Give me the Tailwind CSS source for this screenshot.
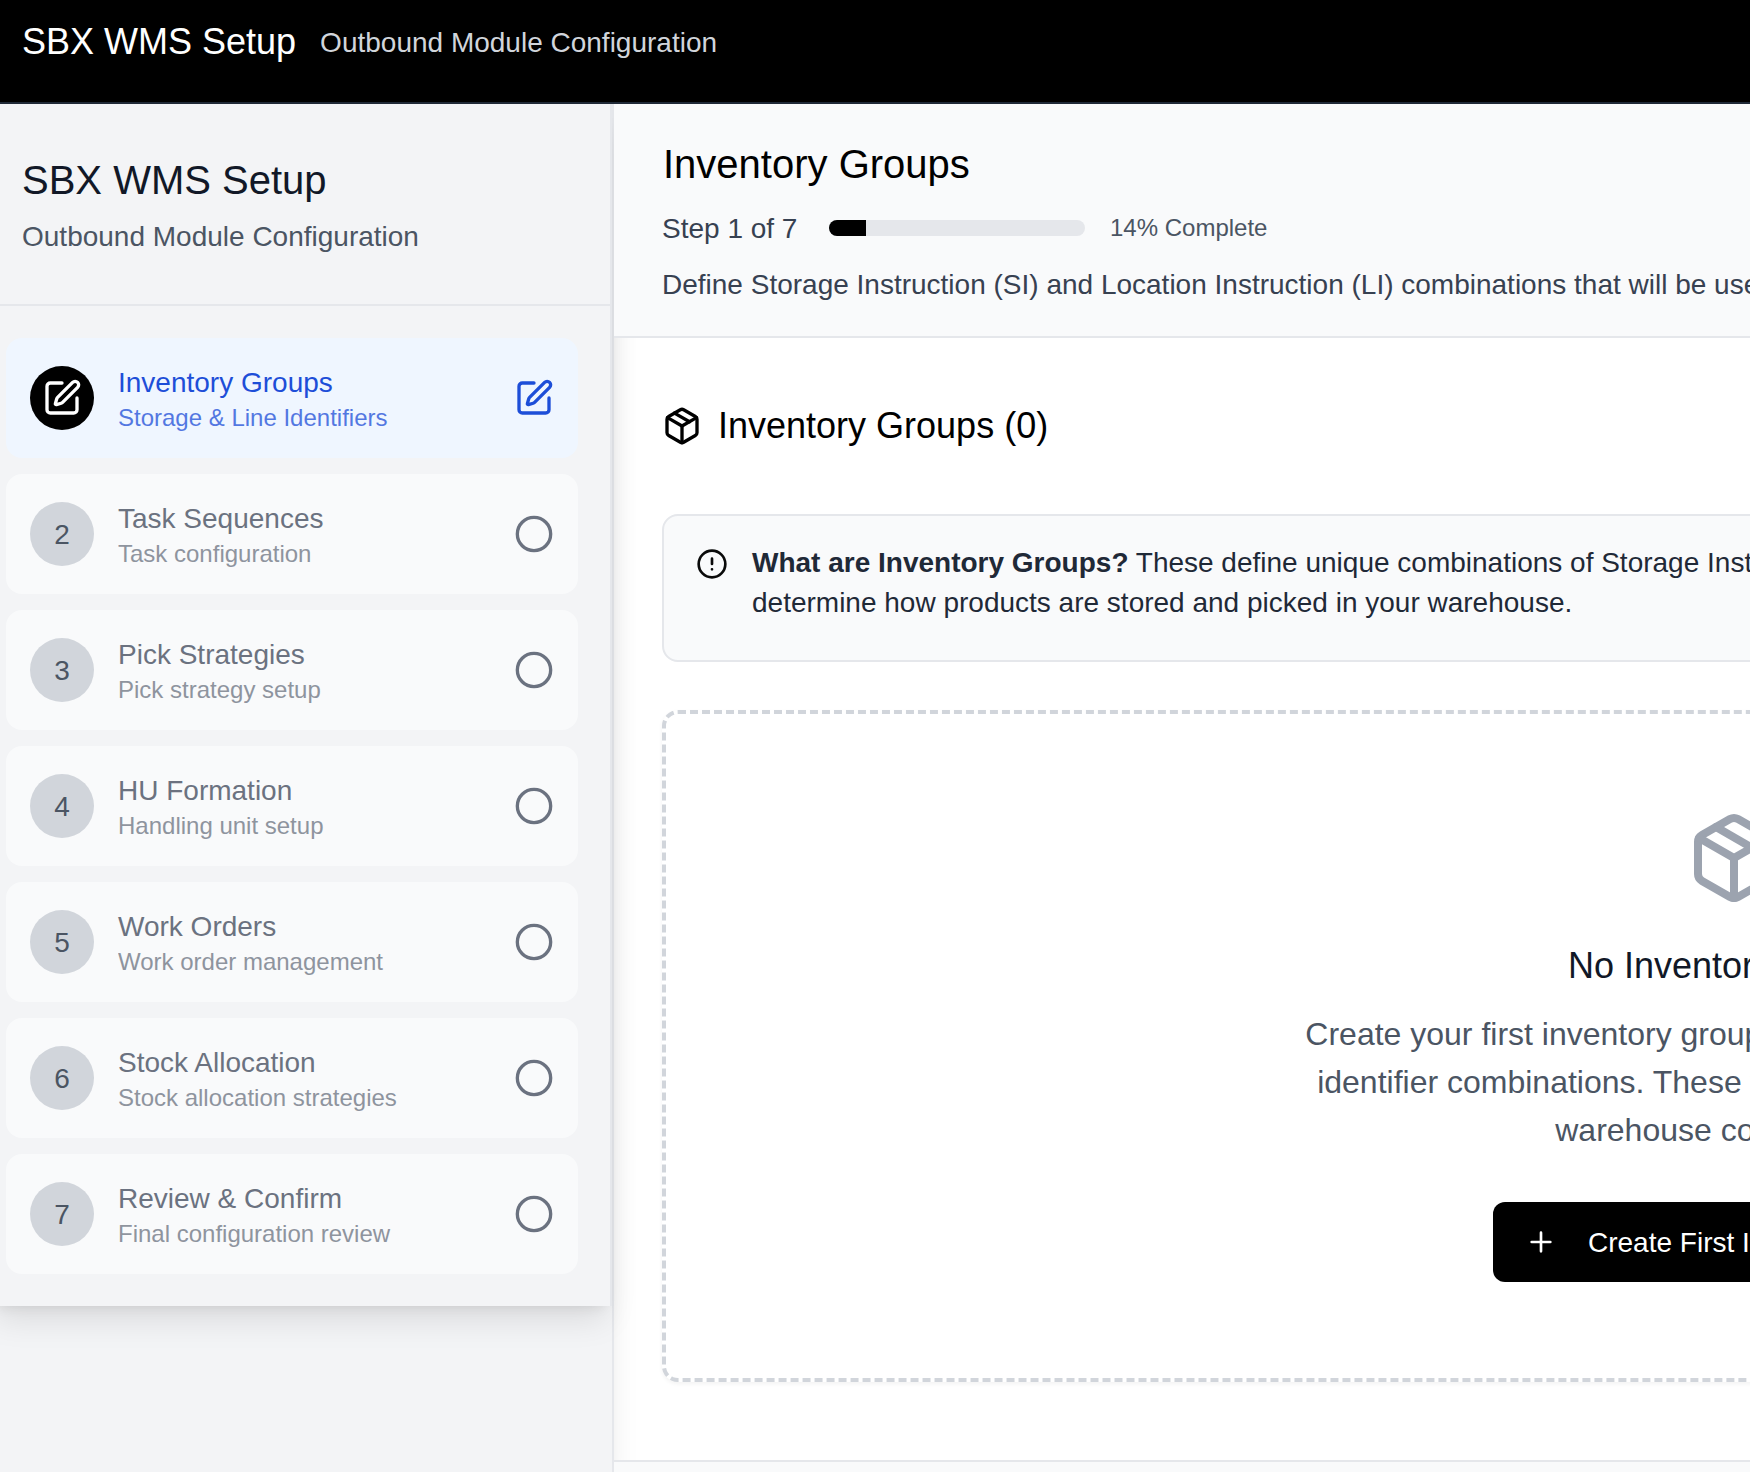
<!DOCTYPE html>
<html lang="en">
<head>
<meta charset="utf-8">
<title>SBX WMS Setup</title>
<script src="https://cdn.jsdelivr.net/npm/@tailwindcss/browser@4"></script>
</head>
<body class="h-[1472px] w-[1750px] overflow-hidden bg-white font-['Liberation_Sans',Arial,sans-serif] text-[28px] leading-[40px]">
<svg class="hidden">
  <symbol id="pen" viewBox="0 0 24 24"><path d="M12 3H5a2 2 0 0 0-2 2v14a2 2 0 0 0 2 2h14a2 2 0 0 0 2-2v-7"/><path d="M18.375 2.625a1 1 0 0 1 3 3l-9.013 9.014a2 2 0 0 1-.853.505l-2.873.84a.5.5 0 0 1-.62-.62l.84-2.873a2 2 0 0 1 .506-.852z"/></symbol>
  <symbol id="circle" viewBox="0 0 24 24"><circle cx="12" cy="12" r="10"/></symbol>
  <symbol id="package" viewBox="0 0 24 24"><path d="m7.5 4.27 9 5.15"/><path d="M21 8a2 2 0 0 0-1-1.73l-7-4a2 2 0 0 0-2 0l-7 4A2 2 0 0 0 3 8v8a2 2 0 0 0 1 1.73l7 4a2 2 0 0 0 2 0l7-4A2 2 0 0 0 21 16Z"/><path d="m3.3 7 8.7 5 8.7-5"/><path d="M12 22V12"/></symbol>
</svg>

<header class="relative z-20 flex h-[104px] border-b-2 border-[#1f2937] bg-black pl-[22px] pt-[14px]">
  <h1 class="h-[56px] text-[36px] leading-[56px] text-white">SBX WMS Setup</h1>
  <span class="ml-6 mt-[9px] text-[#d1d5db]">Outbound Module Configuration</span>
</header>

<div class="flex h-[1368px]">
  <aside class="relative z-10 w-[614px] shrink-0 border-r-2 border-[#e5e7eb] bg-[#f3f4f6] shadow-[0_20px_30px_-6px_rgb(0_0_0/0.1),0_8px_12px_-8px_rgb(0_0_0/0.1)]">
    <div class="-ml-[10px] h-[1202px] w-[622px] border-r-2 border-[#e5e7eb] bg-[#f3f4f6] pl-[10px] shadow-[0_20px_30px_-6px_rgb(0_0_0/0.1),0_8px_12px_-8px_rgb(0_0_0/0.1)]">
      <div class="h-[202px] border-b-2 border-[#e5e7eb] pl-[22px] pt-12">
        <h2 class="text-[40px] leading-[56px] text-[#111827]">SBX WMS Setup</h2>
        <p class="mt-[9px] text-[#4b5563]">Outbound Module Configuration</p>
      </div>
      <nav id="steps" class="flex flex-col gap-4 pl-[6px] pr-8 pt-8"></nav>
    </div>
  </aside>

  <main class="flex w-[2240px] shrink-0 flex-col">
    <section class="relative z-20 h-[234px] border-b-2 border-[#e5e7eb] bg-[#f9fafb] px-12 pt-8">
      <h2 class="pl-px text-[40px] leading-[56px] text-black">Inventory Groups</h2>
      <div class="mt-[12px] flex h-[48px] items-center">
        <span class="w-[167px] pt-[2px] text-[#374151]">Step 1 of 7</span>
        <div class="h-4 w-64 overflow-hidden rounded-full bg-[#e5e7eb]"><div class="h-4 bg-black" style="width:14.2857%"></div></div>
        <span class="ml-[25px] text-[24px] leading-[32px] text-[#4b5563]">14% Complete</span>
      </div>
      <p class="mt-[13px] whitespace-nowrap text-[#374151]">Define Storage Instruction (SI) and Location Instruction (LI) combinations that will be used throughout the system.</p>
    </section>

    <section class="h-[1122px] px-12 pt-[60px]">
      <div class="flex h-[56px] items-center gap-4">
        <svg class="size-10 fill-none stroke-black stroke-2 [stroke-linecap:round] [stroke-linejoin:round]"><use href="#package"/></svg>
        <h3 class="text-[36px] leading-[56px] text-black">Inventory Groups (0)</h3>
      </div>
      <div class="mt-[60px] flex h-[148px] gap-6 rounded-2xl border-2 border-[#e5e7eb] bg-[#f9fafb] px-8 pt-[27px]">
        <svg class="mt-[5px] size-8 shrink-0 fill-none stroke-[#0a0a0a] stroke-2 [stroke-linecap:round] [stroke-linejoin:round]" viewBox="0 0 24 24"><circle cx="12" cy="12" r="10"/><path d="M12 8v4M12 16h.01"/></svg>
        <p class="whitespace-nowrap text-[#1f2937]"><strong class="font-bold">What are Inventory Groups?</strong> These define unique combinations of Storage Instruction (SI) and Location Instruction (LI) that<br>determine how products are stored and picked in your warehouse.</p>
      </div>
      <div class="mt-12 flex h-[672px] w-[2144px] flex-col items-center rounded-2xl border-4 border-dashed border-[#d1d5db] bg-white pt-24 shadow-[0_2px_4px_rgb(0_0_0/0.05)]">
        <svg class="size-24 shrink-0 fill-none stroke-[#9ca3af] stroke-2 [stroke-linecap:round] [stroke-linejoin:round]"><use href="#package"/></svg>
        <h3 class="mt-8 text-[36px] leading-[56px] text-[#111827]">No Inventory Groups</h3>
        <p class="mt-4 whitespace-nowrap text-center text-[32px] leading-[48px] text-[#4b5563]">Create your first inventory group by defining storage and line<br>identifier combinations. These will be used throughout your<br>warehouse configuration.</p>
        <button class="mt-12 flex h-20 w-[482px] items-center gap-[31px] whitespace-nowrap rounded-xl bg-black pl-8 text-white">
          <svg class="size-8 shrink-0 fill-none stroke-white stroke-2 [stroke-linecap:round]" viewBox="0 0 24 24"><path d="M5 12h14M12 5v14"/></svg>
          <span class="pt-px">Create First Inventory Group</span>
        </button>
      </div>
    </section>
    <footer class="relative z-20 h-[12px] border-t-2 border-[#e5e7eb] bg-[#f9fafb]"></footer>
  </main>
</div>

<template id="step">
  <div class="flex h-[120px] items-center rounded-2xl bg-[#f9fafb] px-6 text-[#6b7280]">
    <div class="badge flex size-16 items-center justify-center rounded-full bg-[#d1d5db] leading-[42px] text-[#4b5563]"></div>
    <div class="ml-6 flex-1">
      <div class="name h-10 leading-[42px]"></div>
      <div class="note text-[24px] leading-[32px] opacity-75"></div>
    </div>
    <svg class="size-10 fill-none stroke-current stroke-2 [stroke-linecap:round] [stroke-linejoin:round]"><use href="#circle"/></svg>
  </div>
</template>
<script>
const steps = [
  ['Inventory Groups', 'Storage & Line Identifiers'],
  ['Task Sequences', 'Task configuration'],
  ['Pick Strategies', 'Pick strategy setup'],
  ['HU Formation', 'Handling unit setup'],
  ['Work Orders', 'Work order management'],
  ['Stock Allocation', 'Stock allocation strategies'],
  ['Review & Confirm', 'Final configuration review']
];
const nav = document.getElementById('steps');
steps.forEach(([name, note], i) => {
  const card = document.getElementById('step').content.cloneNode(true).firstElementChild;
  card.querySelector('.name').textContent = name;
  card.querySelector('.note').textContent = note;
  const badge = card.querySelector('.badge');
  if (i === 0) {
    card.classList.replace('bg-[#f9fafb]', 'bg-[#eff6ff]');
    card.classList.replace('text-[#6b7280]', 'text-[#1d4ed8]');
    badge.classList.replace('bg-[#d1d5db]', 'bg-black');
    badge.classList.replace('text-[#4b5563]', 'text-white');
    card.querySelector('use').setAttribute('href', '#pen');
    badge.appendChild(card.querySelector('svg').cloneNode(true));
  } else {
    const label = document.createElement('span');
    label.className = 'pt-[2px]';
    label.textContent = i + 1;
    badge.appendChild(label);
  }
  nav.appendChild(card);
});
</script>
</body>
</html>
